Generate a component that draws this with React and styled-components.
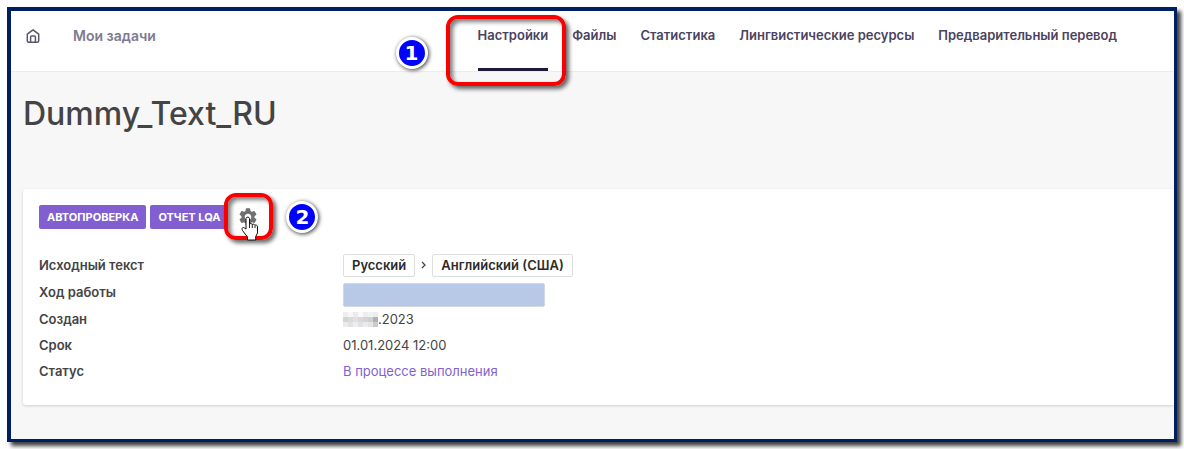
import React from 'react';
import styled, { createGlobalStyle } from 'styled-components';

const GlobalStyle = createGlobalStyle`
  * { box-sizing: border-box; }
  body { margin: 0; padding: 7px; background: #fff; font-family: Inter, "Noto Sans", sans-serif; font-size: 13px; line-height: 20px; color: #444; }
`;

const Frame = styled.div`
  border: solid #001f60;
  border-width: 4px 3px 3px 4px;
  background: #f7f7f7;
  box-shadow: 4px 4px 4px rgba(0, 0, 0, 0.75);
`;

const Header = styled.header`
  display: flex;
  align-items: stretch;
  height: 61px;
  padding: 0 57px 0 14px;
  background: #fff;
  border-bottom: 1px solid #ececec;
`;

const Home = styled.a`
  display: flex;
  align-items: center;
  height: 50px;
  color: #5c566b;
`;

const TasksLink = styled.a`
  margin-left: 32px;
  line-height: 50px;
  font-size: 14px;
  font-weight: 600;
  color: #807a91;
  text-decoration: none;
`;

const Nav = styled.nav`
  display: flex;
  gap: 24px;
  margin-left: auto;
`;

const Tab = styled.a`
  position: relative;
  line-height: 48px;
  font-size: 13px;
  font-weight: 600;
  color: #4a435e;
  text-decoration: none;
  white-space: nowrap;
  border-bottom: 3px solid ${(p) => (p.$active ? '#1f1836' : 'transparent')};
`;

const Highlight = styled.span`
  position: absolute;
  z-index: 1;
  inset: ${(p) => p.$inset};
  border: 4px solid #fb0000;
  border-radius: 12px;
  box-shadow: 3px 3px 4px rgba(0, 0, 0, 0.6), inset 3px 3px 4px rgba(0, 0, 0, 0.5);
  pointer-events: none;
`;

const Step = styled.span`
  position: absolute;
  z-index: 2;
  left: ${(p) => p.$left};
  top: ${(p) => p.$top};
  width: 32px;
  height: 32px;
  border: 3px solid #fff;
  border-radius: 50%;
  background: #00f;
  color: #fff;
  font: bold 20px/26px "DejaVu Sans", sans-serif;
  text-align: center;
  box-shadow: 1px 1px 4px rgba(0, 0, 0, 0.8);
`;

const Main = styled.main`
  padding: 22px 0 34px 12px;
`;

const Title = styled.h1`
  margin: 0 0 55px;
  font-size: 32px;
  line-height: 40px;
  font-weight: 500;
  color: #444;
`;

const Card = styled.section`
  padding: 16px 16px 20px;
  background: #fff;
  border-radius: 3px 0 0 3px;
  box-shadow: 0 1px 3px rgba(0, 0, 0, 0.16);
`;

const Actions = styled.div`
  display: flex;
  gap: 4px;
  margin-bottom: 22px;
`;

const ActionButton = styled.button`
  height: 24px;
  padding: 0 8px;
  border: 0;
  border-radius: 2px;
  background: #825fd0;
  color: #fff;
  font: 700 11px/24px Inter, "Noto Sans", sans-serif;
`;

const GearWrap = styled.div`
  position: relative;
  margin-left: 6px;
`;

const GearButton = styled.button`
  display: flex;
  align-items: center;
  justify-content: center;
  width: 20px;
  height: 24px;
  padding: 0;
  border: 0;
  background: none;
  color: #707070;
`;

const Cursor = styled.svg`
  position: absolute;
  z-index: 3;
  left: 3px;
  top: 11px;
`;

const Details = styled.dl`
  margin: 0;
`;

const Row = styled.div`
  display: grid;
  grid-template-columns: 304px 1fr;
  align-items: ${(p) => (p.$top ? 'start' : 'center')};
  min-height: ${(p) => (p.$tall ? '28px' : '26px')};
  padding-bottom: ${(p) => (p.$tall ? '0' : '2px')};
`;

const Label = styled.dt`
  font-weight: 600;
  line-height: ${(p) => (p.$loose ? '26px' : '20px')};
`;

const Value = styled.dd`
  display: flex;
  align-items: center;
  margin: 0;
`;

const Language = styled.span`
  padding: 0 8px;
  border: 1px solid #dedede;
  border-radius: 2px;
  line-height: 21px;
  font-weight: 600;
  color: #2b2b2b;
`;

const Arrow = styled.svg`
  margin: 0 5px;
`;

const Progress = styled.div`
  width: 202px;
  height: 24px;
  margin-top: 4px;
  border: 1px solid #d4d8df;
  border-radius: 2px;
  background: #b8c9e8;
`;

const StatusLink = styled.a`
  color: #825fd0;
  text-decoration: none;
`;

const mosaic = [
  ['#f0efed', '#f7f7f8', '#ecebeb', '#faf9fa', '#ededed', '#f3f2f2', '#ededee'],
  ['#d5d4d4', '#dadada', '#e8e0d8', '#d6dade', '#d5d4d3', '#cfcfcf', '#b2b1b3'],
  ['#ebebeb', '#e0e2e4', '#ededed', '#dfe2e5', '#e9ebed', '#e4e4e4', '#cbcbcb'],
];

const Mosaic = () => (
  <svg width="35" height="15" viewBox="0 0 35 15" shapeRendering="crispEdges" aria-hidden="true">
    {mosaic.map((line, y) => line.map((c, x) => <rect key={`${x}-${y}`} x={x * 5} y={y * 5} width="5" height="5" fill={c} />))}
  </svg>
);

const tabs = ['Файлы', 'Статистика', 'Лингвистические ресурсы', 'Предварительный перевод'];

export default function App() {
  return (
    <>
      <GlobalStyle />
      <Frame>
        <Header>
          <Home href="#home" aria-label="Home">
            <svg width="16" height="16" viewBox="0 0 16 16" fill="none" stroke="currentColor" strokeWidth="1.5" strokeLinejoin="round">
              <path d="M2.300 6.200 8 1.800l5.700 4.400v6.600a1.500 1.500 0 0 1-1.500 1.500H3.800a1.500 1.500 0 0 1-1.500-1.500Z" />
              <path d="M5.600 14.300V9a1 1 0 0 1 1-1h2.800a1 1 0 0 1 1 1v5.300" />
            </svg>
          </Home>
          <TasksLink href="#tasks">Мои задачи</TasksLink>
          <Nav>
            <Tab href="#settings" $active>
              Настройки
              <Highlight $inset="4px -18px -18px -32px" />
              <Step $left="-82px" $top="26px">1</Step>
            </Tab>
            {tabs.map((t) => <Tab key={t} href="#tab">{t}</Tab>)}
          </Nav>
        </Header>
        <Main>
          <Title>Dummy_Text_RU</Title>
          <Card>
            <Actions>
              <ActionButton>АВТОПРОВЕРКА</ActionButton>
              <ActionButton>ОТЧЕТ LQA</ActionButton>
              <GearWrap>
                <GearButton aria-label="Settings">
                  <svg width="22" height="22" viewBox="1 1 22 22" fill="currentColor">
                    <path d="M19.140 12.940c.04-.3.060-.61.060-.94 0-.32-.02-.64-.07-.94l2.030-1.580a.49.49 0 0 0 .12-.61l-1.920-3.320a.488.488 0 0 0-.59-.22l-2.390.96c-.5-.38-1.030-.7-1.620-.94l-.36-2.540a.484.484 0 0 0-.48-.41h-3.840c-.24 0-.43.17-.47.41l-.36 2.540c-.59.24-1.130.57-1.620.94l-2.390-.96c-.22-.08-.47 0-.59.22L2.740 8.870c-.12.21-.08.47.12.61l2.030 1.580c-.05.3-.09.63-.09.94s.02.64.07.94l-2.030 1.580a.49.49 0 0 0-.12.61l1.920 3.320c.12.22.37.29.59.22l2.390-.96c.5.38 1.030.7 1.620.94l.36 2.540c.05.24.24.41.48.41h3.840c.24 0 .44-.17.47-.41l.36-2.540c.59-.24 1.130-.56 1.620-.94l2.390.96c.22.08.47 0 .59-.22l1.920-3.320c.12-.22.07-.47-.12-.61l-2.010-1.580zM12 15.600c-1.980 0-3.600-1.620-3.600-3.600s1.620-3.600 3.600-3.600 3.600 1.620 3.600 3.600-1.620 3.600-3.600 3.600z" />
                  </svg>
                </GearButton>
                <Highlight $inset="-12px -15px -11px -14px" />
                <Cursor width="18" height="25" viewBox="0 0 18 25" aria-hidden="true">
                  <path d="M5 13V2.500a1.800 1.800 0 0 1 3.500 0V8c.5-.7 2.400-.6 2.700.5.600-.7 2.300-.4 2.600.7.900-.6 2.700 0 2.700 1.600v6.200l-1.800 3.500v3.500H6.500v-3L1.500 14.500C.2 12 2 10.500 3.700 12.200Z" fill="#fff" stroke="#111" />
                  <path d="M8.500 8v4M11.300 8.500V12M14 9.500V12" stroke="#222" />
                </Cursor>
                <Step $left="48px" $top="-4px">2</Step>
              </GearWrap>
            </Actions>
            <Details>
              <Row $tall>
                <Label>Исходный текст</Label>
                <Value>
                  <Language>Русский</Language>
                  <Arrow width="7" height="8" viewBox="0 0 7 8" fill="none" stroke="#444" strokeWidth="1.3"><path d="m2 1 3 3-3 3" /></Arrow>
                  <Language>Английский (США)</Language>
                </Value>
              </Row>
              <Row $tall $top>
                <Label $loose>Ход работы</Label>
                <Value><Progress /></Value>
              </Row>
              <Row>
                <Label>Создан</Label>
                <Value><Mosaic />.2023</Value>
              </Row>
              <Row>
                <Label>Срок</Label>
                <Value>01.01.2024 12:00</Value>
              </Row>
              <Row>
                <Label>Статус</Label>
                <Value><StatusLink href="#status">В процессе выполнения</StatusLink></Value>
              </Row>
            </Details>
          </Card>
        </Main>
      </Frame>
    </>
  );
}
